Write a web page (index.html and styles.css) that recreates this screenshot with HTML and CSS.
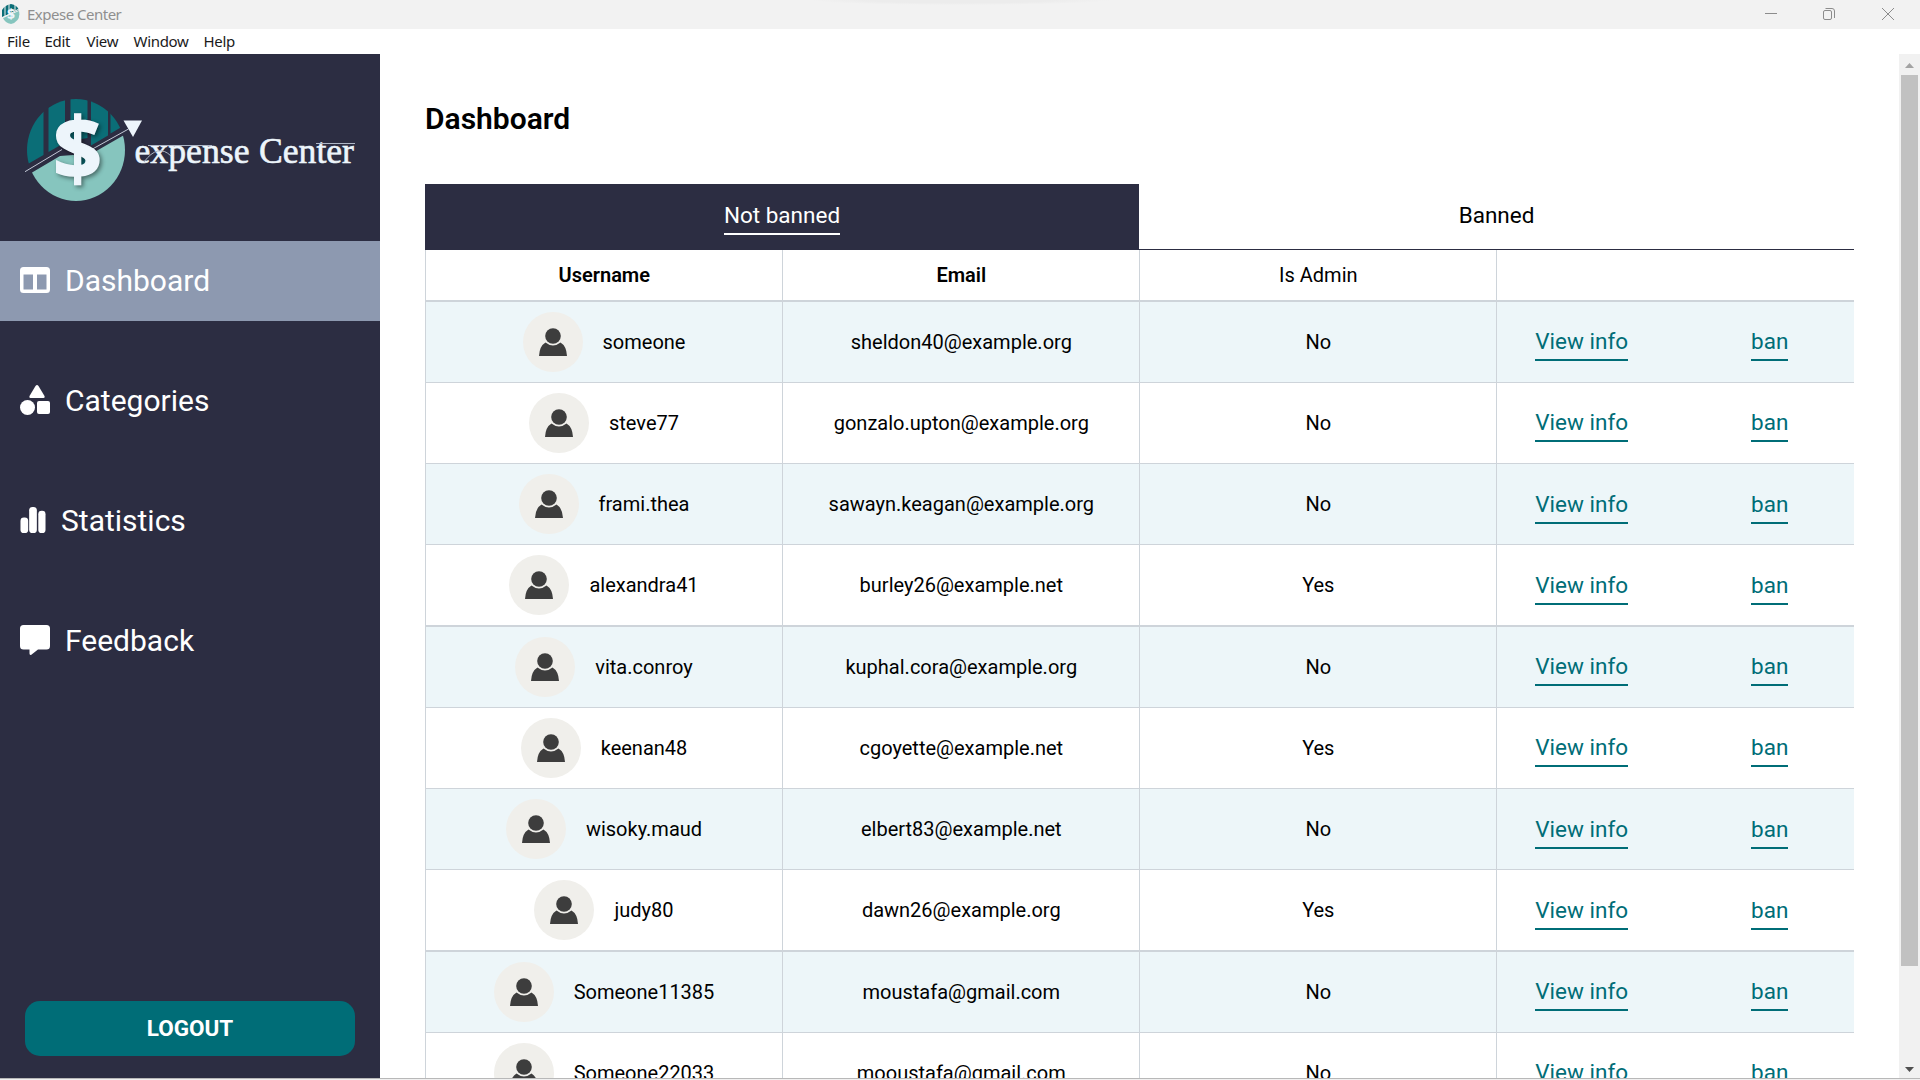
FILE: index.html
```html
<!DOCTYPE html>
<html lang="en">
<head>
<meta charset="utf-8">
<title>Expese Center</title>
<link rel="stylesheet" href="styles.css">
</head>
<body>
<svg class="defs" aria-hidden="true">
  <symbol id="person" viewBox="0 0 60 60">
    <circle cx="30" cy="30" r="30" fill="#f0efeb"/>
    <circle cx="30" cy="24" r="7.800" fill="#3d3d3d"/>
    <path d="M22.500 30.500Q30 36.500 37.500 30.500Q43.500 34 44 44H16Q16.500 34 22.500 30.500Z" fill="#3d3d3d"/>
  </symbol>
</svg>

<header class="titlebar">
  <svg class="app-icon" viewBox="0 0 18 20"><path d="M0 13V6Q3 1 9 0Q15 1 17 6Z" fill="#0b6e77"/><path d="M1 14L17 7Q19 17 9 20Q3 19 1 14Z" fill="#86c5be"/><path d="M3 1V12M7 0V9M13 1V7M0 14L17 5" stroke="#f2f2f2"/><text x="9" y="15" class="mini-dollar">$</text></svg>
  <span class="app-name">Expese Center</span>
  <svg class="window-buttons" viewBox="0 0 130 14" fill="none" stroke="#8c8c8c"><path d="M0 6.500H12"/><rect x="58.500" y="3.500" width="8" height="9" rx="1.500"/><path d="M60.500 1.500H67Q69.500 1.500 69.500 4V11"/><path d="M117 1L129 13M129 1L117 13"/></svg>
</header>
<nav class="menubar"><span>File</span><span>Edit</span><span>View</span><span>Window</span><span>Help</span></nav>

<div class="app">
  <aside class="sidebar">
    <svg class="logo" viewBox="0 0 380 187">
      <clipPath id="disc"><ellipse cx="76" cy="96" rx="49" ry="51"/></clipPath>
      <g clip-path="url(#disc)">
        <path fill="#0b6e77" d="M20 40H43.500V101L20 114.500ZM48.500 40H65V88.500L48.500 98ZM70.500 40H87.500V84L70.500 87ZM91 40H108V81.500L91 91.500ZM110.500 40H130V68L110.500 79.500Z"/>
        <path fill="#86c5be" d="M20 125.500L60 102L92 99.500L130 77.500V150H20Z"/>
      </g>
      <path fill="#0b6e77" d="M81 103Q89 105 88.500 111Q87.500 116 81 115ZM67 80Q67 74 74 73V87Q67 86 67 80Z"/>
      <path d="M25 117.700L62 95.500M88 97.500L128.500 75" fill="none" stroke="#c3c8d6"/>
      <path d="M123.500 66.500H142L133 83Z" fill="#edf5fb"/>
      <text class="dollar" x="77.500" y="126">$</text>
      <text class="wordmark" x="134.500" y="108.500" textLength="115" lengthAdjust="spacingAndGlyphs">expense</text>
      <text class="wordmark" x="259" y="108.500" textLength="95" lengthAdjust="spacingAndGlyphs">Center</text>
      <path d="M148 91.500H212M316 89.500H355M144 108Q158 89 171 102" fill="none" stroke="#aeb6c6"/>
    </svg>
    <div class="nav">
      <a class="nav-item active"><svg width="30" height="26" viewBox="0 0 30 26"><path fill-rule="evenodd" d="M3.500 0H26.500Q30 0 30 3.500V22.500Q30 26 26.500 26H3.500Q0 26 0 22.500V3.500Q0 0 3.500 0ZM3.500 7.500V22.500H13V7.500ZM17 7.500V22.500H26.500V7.500Z"/></svg>Dashboard</a>
      <a class="nav-item"><svg width="30" height="30" viewBox="0 0 30 30"><path d="M15.500 1Q17 -1 18.500 1L24.500 11Q25 13 23.500 13H10.500Q9 13 9.500 11Z"/><circle cx="7.500" cy="22.500" r="7.500"/><rect x="17" y="16" width="13" height="13" rx="2"/></svg>Categories</a>
      <a class="nav-item"><svg width="26" height="26" viewBox="0 0 26 27"><rect y="11" width="8" height="16" rx="3.500"/><rect x="9" width="8" height="27" rx="3.500"/><rect x="18.500" y="4" width="7.500" height="23" rx="3.500"/></svg>Statistics</a>
      <a class="nav-item"><svg width="30" height="30" viewBox="0 0 30 30"><path d="M3.500 0H26.500Q30 0 30 3.500V21Q30 24.500 26.500 24.500H18L11 30Q9.500 30 9.500 28.500V24.500H3.500Q0 24.500 0 21V3.500Q0 0 3.500 0Z"/></svg>Feedback</a>
    </div>
    <button class="logout">LOGOUT</button>
  </aside>

  <main class="content">
    <h1>Dashboard</h1>
    <div class="tabs">
      <div class="tab selected"><span>Not banned</span></div>
      <div class="tab"><span>Banned</span></div>
    </div>
    <div class="table">
      <div class="row head"><div class="cell strong">Username</div><div class="cell strong">Email</div><div class="cell">Is Admin</div><div class="cell"></div></div>
      <div class="row"><div class="cell user"><svg class="avatar"><use href="#person"/></svg>someone</div><div class="cell">sheldon40@example.org</div><div class="cell">No</div><div class="cell actions"><a>View info</a><a>ban</a></div></div>
      <div class="row"><div class="cell user"><svg class="avatar"><use href="#person"/></svg>steve77</div><div class="cell">gonzalo.upton@example.org</div><div class="cell">No</div><div class="cell actions"><a>View info</a><a>ban</a></div></div>
      <div class="row"><div class="cell user"><svg class="avatar"><use href="#person"/></svg>frami.thea</div><div class="cell">sawayn.keagan@example.org</div><div class="cell">No</div><div class="cell actions"><a>View info</a><a>ban</a></div></div>
      <div class="row"><div class="cell user"><svg class="avatar"><use href="#person"/></svg>alexandra41</div><div class="cell">burley26@example.net</div><div class="cell">Yes</div><div class="cell actions"><a>View info</a><a>ban</a></div></div>
      <div class="row"><div class="cell user"><svg class="avatar"><use href="#person"/></svg>vita.conroy</div><div class="cell">kuphal.cora@example.org</div><div class="cell">No</div><div class="cell actions"><a>View info</a><a>ban</a></div></div>
      <div class="row"><div class="cell user"><svg class="avatar"><use href="#person"/></svg>keenan48</div><div class="cell">cgoyette@example.net</div><div class="cell">Yes</div><div class="cell actions"><a>View info</a><a>ban</a></div></div>
      <div class="row"><div class="cell user"><svg class="avatar"><use href="#person"/></svg>wisoky.maud</div><div class="cell">elbert83@example.net</div><div class="cell">No</div><div class="cell actions"><a>View info</a><a>ban</a></div></div>
      <div class="row"><div class="cell user"><svg class="avatar"><use href="#person"/></svg>judy80</div><div class="cell">dawn26@example.org</div><div class="cell">Yes</div><div class="cell actions"><a>View info</a><a>ban</a></div></div>
      <div class="row"><div class="cell user"><svg class="avatar"><use href="#person"/></svg>Someone11385</div><div class="cell">moustafa@gmail.com</div><div class="cell">No</div><div class="cell actions"><a>View info</a><a>ban</a></div></div>
      <div class="row"><div class="cell user"><svg class="avatar"><use href="#person"/></svg>Someone22033</div><div class="cell">mooustafa@gmail.com</div><div class="cell">No</div><div class="cell actions"><a>View info</a><a>ban</a></div></div>
    </div>
  </main>

  <div class="scrollbar">
    <svg class="arrow" viewBox="0 0 21 21"><path d="M6 14H15L10.500 9Z" fill="#a3a3a3"/></svg>
    <div class="thumb"></div>
    <svg class="arrow" viewBox="0 0 21 21"><path d="M6 10H15L10.500 15Z" fill="#505050"/></svg>
  </div>
</div>
</body>
</html>
```
FILE: styles.css
```css
* { box-sizing: border-box; }
body {
  margin: 0;
  height: 1080px;
  overflow: hidden;
  display: flex;
  flex-direction: column;
  background: #f0f0f0;
  color: #000;
  font: 20px Roboto, sans-serif;
}
.defs { display: none; }

.titlebar {
  height: 29px;
  flex: none;
  display: flex;
  align-items: center;
  padding: 0 25px 1px 2px;
  background: radial-gradient(150px 5px at 960px 0, #ececec 60%, #f2f2f2);
  color: #8f8f8f;
  font: 15px "Noto Sans", sans-serif;
}
.app-icon { width: 18px; height: 20px; margin-right: 7px; }
.mini-dollar { font: bold 14px "Open Sans", sans-serif; fill: #edf5fb; text-anchor: middle; }
.app-name { letter-spacing: -0.5px; }
.window-buttons { width: 130px; height: 14px; margin-left: auto; }

.menubar {
  height: 25px;
  flex: none;
  display: grid;
  grid-template-columns: 37.500px 42px 47px 70px 60px;
  align-items: center;
  padding: 0 0 2px 7px;
  background: #fff;
  color: #1a1a1a;
  font: 15px "Noto Sans", sans-serif;
  letter-spacing: -0.3px;
}

.app { height: 1025px; display: flex; overflow: hidden; border-bottom: 1px solid #b8b8b8; }

.sidebar {
  width: 380px;
  flex: none;
  display: flex;
  flex-direction: column;
  background: #2c2d42;
}
.logo { display: block; width: 380px; height: 187px; flex: none; }
.dollar {
  font: bold 86px "Open Sans", sans-serif;
  fill: #edf5fb;
  stroke: #edf5fb;
  stroke-width: 1.500px;
  text-anchor: middle;
  filter: drop-shadow(2px 2px 2px rgba(0, 0, 0, .45));
}
.wordmark {
  font: 36px "Liberation Serif", serif;
  fill: #edf5fb;
  stroke: #edf5fb;
  stroke-width: .6px;
}

.nav { display: flex; flex-direction: column; gap: 40px; }
.nav-item {
  height: 80px;
  display: flex;
  align-items: center;
  gap: 15px;
  padding: 0 0 2px 20px;
  color: #fff;
  font-size: 30px;
}
.nav-item svg { fill: #fff; }
.nav-item.active { background: #8d99b0; }

.logout {
  height: 55px;
  margin: auto 25px 22px;
  padding: 0 0 2px;
  border: 0;
  border-radius: 15px;
  background: #006d77;
  color: #fff;
  font: bold 22.500px Roboto, sans-serif;
}

.content { flex: 1; padding: 47px 45px 0; overflow: hidden; background: #fff; }
h1 { margin: 0 0 48px; font-size: 30px; line-height: 35px; font-weight: 600; }

.tabs { display: flex; height: 66px; }
.tab {
  width: 714px;
  display: flex;
  align-items: center;
  justify-content: center;
  border-bottom: 1px solid #2c2d42;
  font-size: 22.500px;
}
.tab:last-child { width: 715px; }
.tab span { padding: 4.600px 0 5.400px; border-bottom: 2px solid transparent; }
.tab.selected { background: #2c2d42; color: #fff; }
.tab.selected span { border-color: #fff; }

.row {
  width: 1429px;
  height: 81px;
  display: grid;
  grid-template-columns: 357px 357px 357px 358px;
  border-bottom: 1px solid #ced4da;
}
.row:nth-child(even) { background: #edf6f9; }
.row:nth-child(4n + 1) { height: 82px; border-bottom-width: 2px; }
.row.head { height: 52px; }
.cell {
  display: flex;
  align-items: center;
  justify-content: center;
  padding-left: .6px;
  border-left: 1px solid #ced4da;
}
.strong { font-weight: 600; }
.user { gap: 20px; padding-left: 0; }
.avatar { width: 60px; height: 60px; }
.actions { justify-content: flex-start; gap: 123px; padding-left: 38.300px; }
.row:nth-child(4n) .actions, .row:nth-child(4n + 5) .actions { padding-top: 1px; }
.actions a {
  padding: 5px 0;
  border-bottom: 2px solid #006d77;
  color: #006d77;
  font-size: 22.500px;
}

.scrollbar { width: 21px; flex: none; display: flex; flex-direction: column; background: #f1f1f1; }
.arrow { width: 21px; height: 21px; flex: none; }
.thumb { height: 891px; margin: 0 2px auto; background: #c1c1c1; }
```
